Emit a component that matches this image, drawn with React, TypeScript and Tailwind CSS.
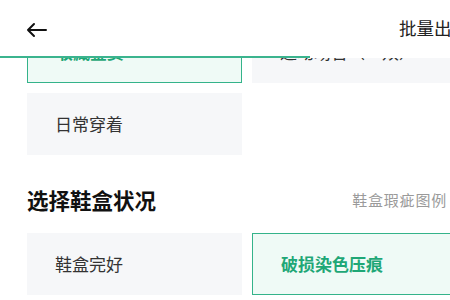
import { ChevronRight } from 'lucide-react';

const font = { fontFamily: '"Noto Sans CJK SC", "Noto Sans", sans-serif' };

function Option({ label, active = false }: { label: string; active?: boolean }) {
    return (
        <div
            className={
                active
                    ? 'h-[62px] flex items-center pl-[28px] bg-[#effaf6] border-[1.5px] border-[#34b38a] text-[17px] font-bold text-[#1fa776]'
                    : 'h-[62px] flex items-center pl-[28px] bg-[#f6f7f9] text-[17px] text-[#333]'
            }
        >
            {label}
        </div>
    );
}

export default function App() {
    return (
        <div className="w-[450px] h-[300px] overflow-hidden bg-white" style={font}>
            <div className="w-[494px]">
                {/* 顶部栏 */}
                <div className="h-[56px] flex items-center justify-between pl-[26px] pr-[25px]">
                    <svg width="21" height="16" viewBox="0 0 21 16" fill="none" className="mt-[4px]">
                        <path d="M20 8H2M8 2L2 8l6 6" stroke="#111" strokeWidth="2" strokeLinecap="round" strokeLinejoin="round" />
                    </svg>
                    <span className="text-[17.5px] text-[#222]">批量出售</span>
                </div>
                <div className="h-[2px] w-[310px] bg-[#3bb48e]" />

                {/* 内容 */}
                <div className="h-[242px] overflow-hidden">
                    <div className="-mt-[37px] px-[27px]">
                        <div className="grid grid-cols-2 gap-[10px]">
                            <Option label="收藏鉴赏" active />
                            <Option label="运动场合（一双）" />
                            <Option label="日常穿着" />
                        </div>

                        <div className="flex items-center justify-between mt-[34px] h-[22px]">
                            <span className="text-[21.5px] font-bold text-[#111]">选择鞋盒状况</span>
                            <span className="flex items-center gap-[4px] text-[15px] text-[#9a9a9a] tracking-[0.8px]">
                                鞋盒瑕疵图例
                                <ChevronRight size={16} strokeWidth={1.8} className="text-[#aaa]" />
                            </span>
                        </div>

                        <div className="grid grid-cols-2 gap-[10px] mt-[22px]">
                            <Option label="鞋盒完好" />
                            <Option label="破损染色压痕" active />
                        </div>
                    </div>
                </div>
            </div>
        </div>
    );
}
